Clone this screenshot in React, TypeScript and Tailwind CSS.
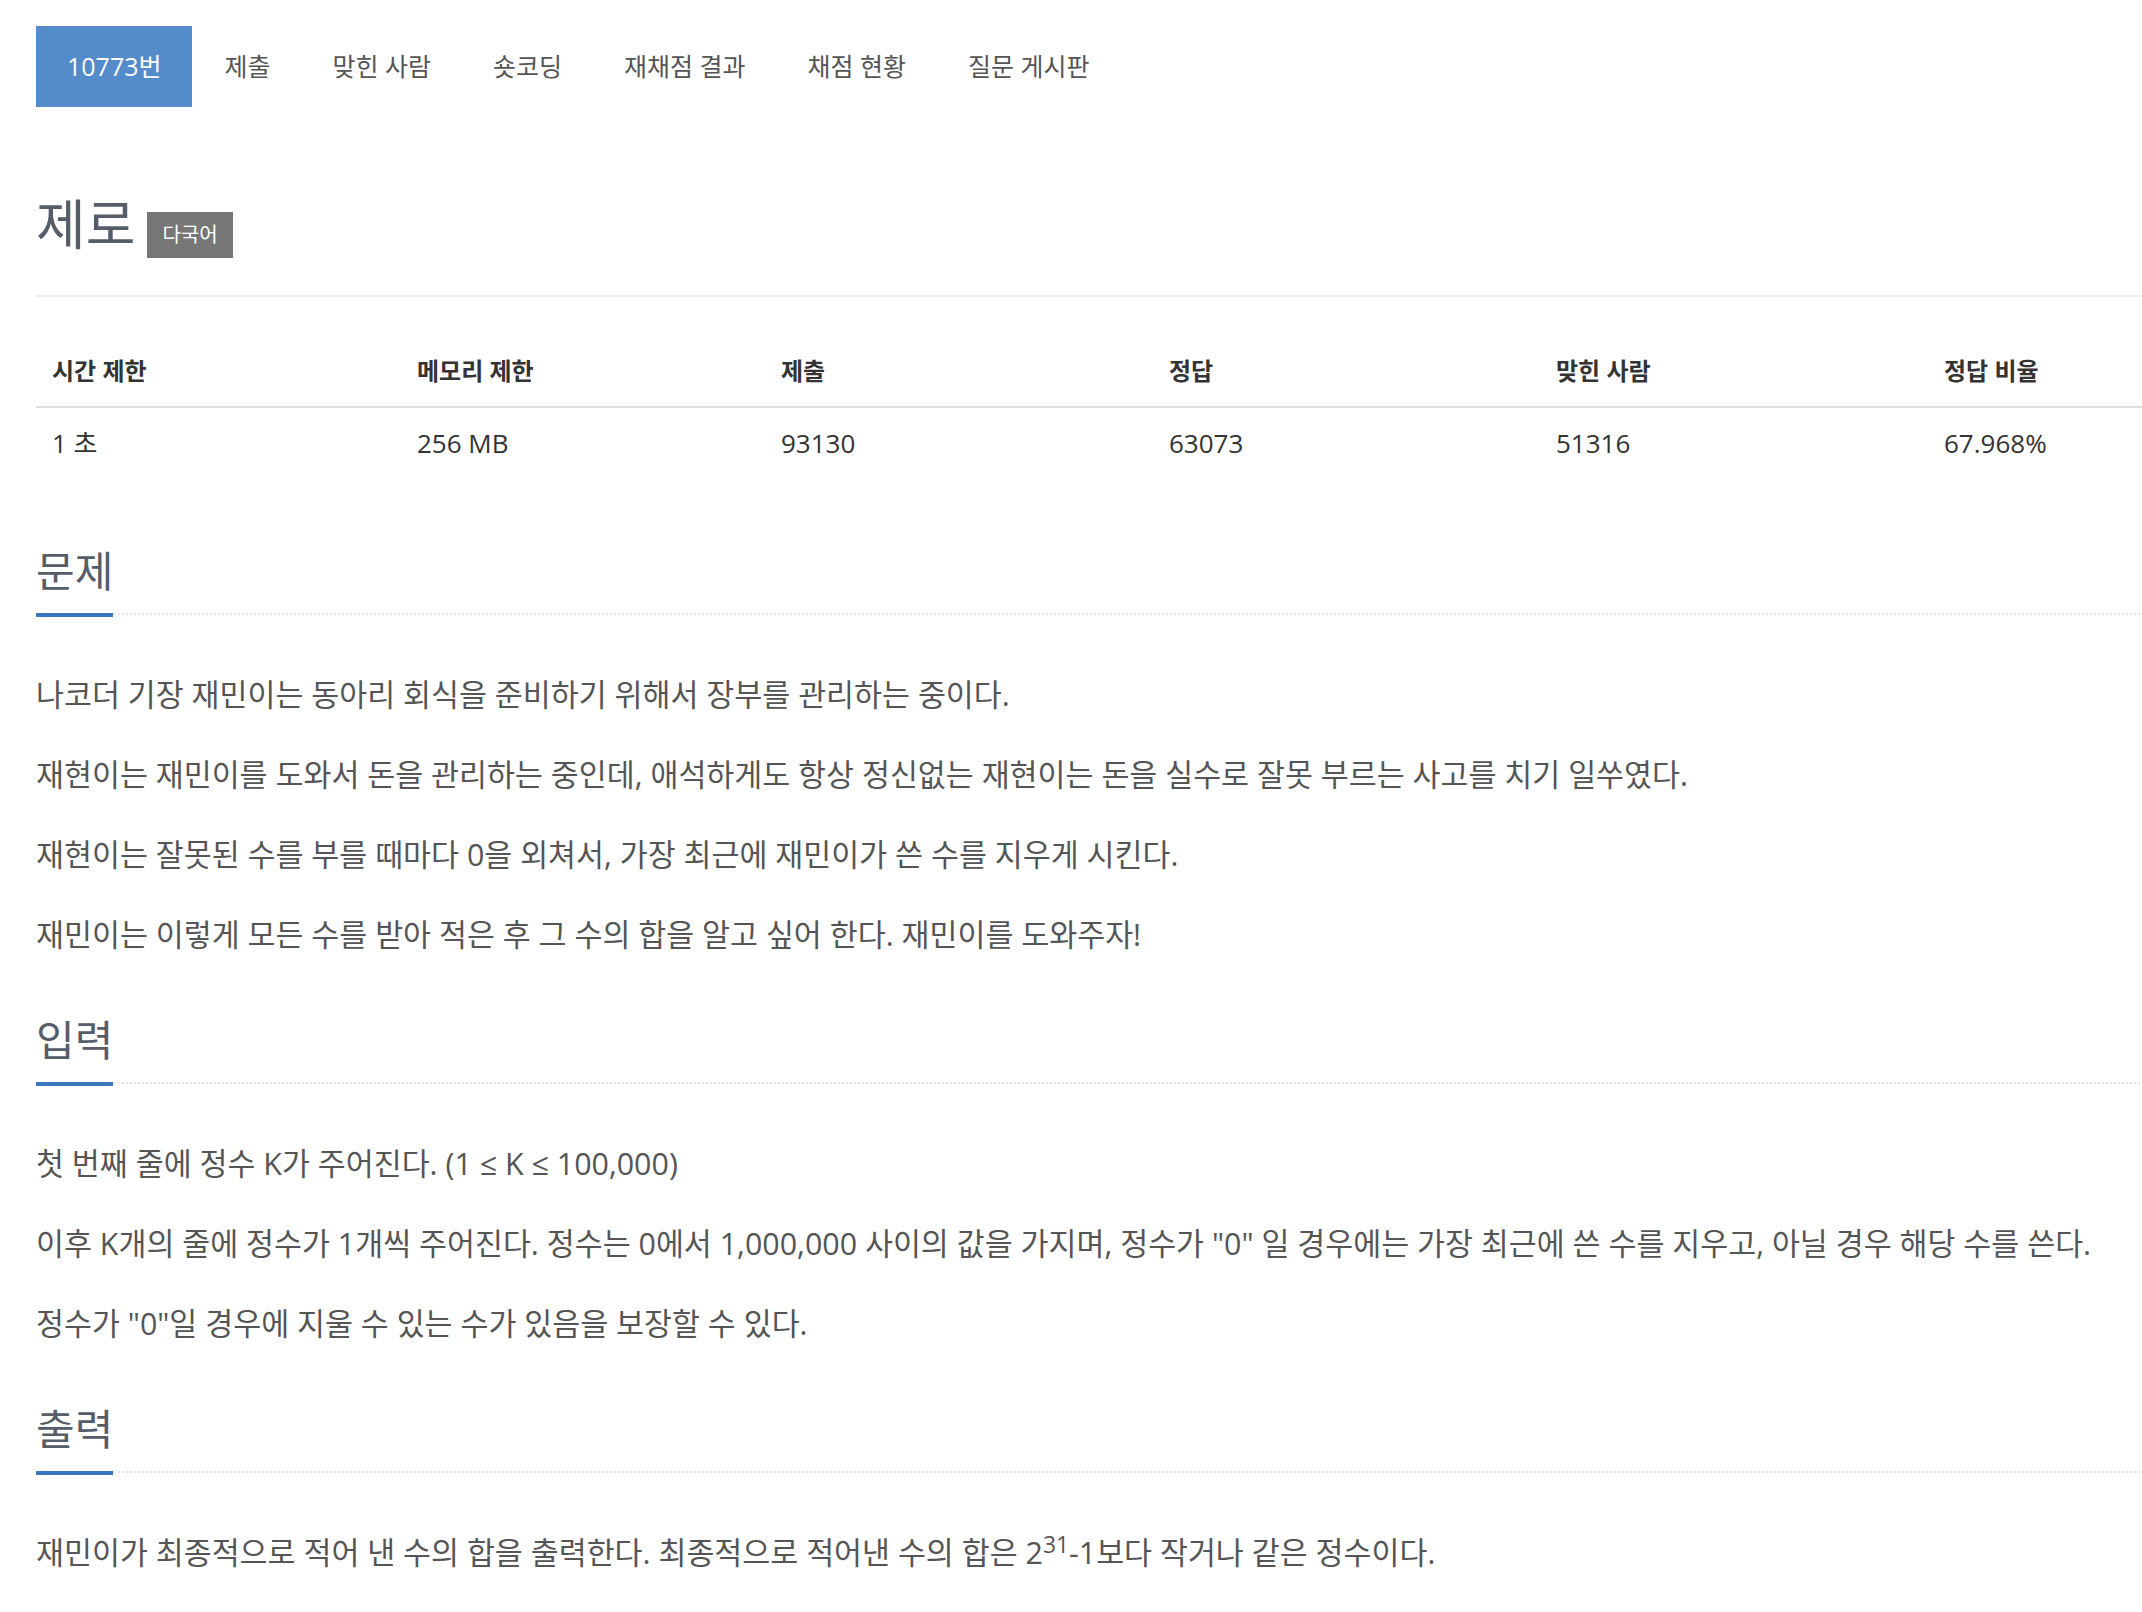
import React from "react";

const navItems = ["제출", "맞힌 사람", "숏코딩", "재채점 결과", "채점 현황", "질문 게시판"];

const headers = ["시간 제한", "메모리 제한", "제출", "정답", "맞힌 사람", "정답 비율"];
const values = ["1 초", "256 MB", "93130", "63073", "51316", "67.968%"];

function Heading({ children }: { children: React.ReactNode }) {
  return (
    <div className="flex items-end">
      <h2 className="text-[42px] leading-[48px] pb-[18px] border-b-4 border-[#3a76bd] text-[#555d68] font-normal">
        {children}
      </h2>
      <div className="flex-1 border-b-2 border-dotted border-[#e1e5ec] mb-[2px]" />
    </div>
  );
}

function Paras({ items }: { items: React.ReactNode[] }) {
  return (
    <div className="mt-[58px] flex flex-col gap-[40px] text-[30.4px] leading-[40px] text-[#555555]">
      {items.map((p, i) => (
        <p key={i} className="whitespace-nowrap">
          {p}
        </p>
      ))}
    </div>
  );
}

export default function App() {
  return (
    <div className="w-full overflow-hidden bg-white font-['Open_Sans','Noto_Sans_CJK_KR',sans-serif]">
      <div className="w-[2240px] pl-[36px] pt-[26px] pb-[40px]">
        {/* nav */}
        <div className="flex gap-[2px] text-[25px] leading-[81px]">
          <div className="px-[31px] bg-[#548bca] text-white">10773번</div>
          {navItems.map((n) => (
            <div key={n} className="px-[30px] text-[#555555]">
              {n}
            </div>
          ))}
        </div>

        {/* title */}
        <div className="mt-[87px] flex items-start gap-[12px]">
          <h1 className="text-[54px] leading-[60px] text-[#555d68] font-normal">제로</h1>
          <span className="mt-[18px] h-[46px] px-[15px] bg-[#777777] text-white text-[20px] leading-[46px]">
            다국어
          </span>
        </div>
        <div className="mt-[37px] h-[2px] bg-[#eeeeee]" />

        {/* table */}
        <div className="mt-[56px]">
          <div className="grid grid-cols-[365px_364px_388px_387px_388px_316px] border-b-2 border-[#dddddd]">
            {headers.map((h) => (
              <div key={h} className="pl-[16px] pb-[17px] text-[24px] leading-[36px] font-bold text-[#333333]">
                {h}
              </div>
            ))}
          </div>
          <div className="grid grid-cols-[365px_364px_388px_387px_388px_316px]">
            {values.map((v) => (
              <div key={v} className="pl-[16px] pt-[17px] pb-[17px] text-[26px] leading-[36px] text-[#333333]">
                {v}
              </div>
            ))}
          </div>
        </div>

        {/* 문제 */}
        <div className="mt-[69px]">
          <Heading>문제</Heading>
          <Paras
            items={[
              "나코더 기장 재민이는 동아리 회식을 준비하기 위해서 장부를 관리하는 중이다.",
              "재현이는 재민이를 도와서 돈을 관리하는 중인데, 애석하게도 항상 정신없는 재현이는 돈을 실수로 잘못 부르는 사고를 치기 일쑤였다.",
              "재현이는 잘못된 수를 부를 때마다 0을 외쳐서, 가장 최근에 재민이가 쓴 수를 지우게 시킨다.",
              "재민이는 이렇게 모든 수를 받아 적은 후 그 수의 합을 알고 싶어 한다. 재민이를 도와주자!",
            ]}
          />
        </div>

        {/* 입력 */}
        <div className="mt-[61px]">
          <Heading>입력</Heading>
          <Paras
            items={[
              "첫 번째 줄에 정수 K가 주어진다. (1 ≤ K ≤ 100,000)",
              "이후 K개의 줄에 정수가 1개씩 주어진다. 정수는 0에서 1,000,000 사이의 값을 가지며, 정수가 \"0\" 일 경우에는 가장 최근에 쓴 수를 지우고, 아닐 경우 해당 수를 쓴다.",
              "정수가 \"0\"일 경우에 지울 수 있는 수가 있음을 보장할 수 있다.",
            ]}
          />
        </div>

        {/* 출력 */}
        <div className="mt-[61px]">
          <Heading>출력</Heading>
          <Paras
            items={[
              <>
                재민이가 최종적으로 적어 낸 수의 합을 출력한다. 최종적으로 적어낸 수의 합은 2<sup>31</sup>-1보다 작거나 같은 정수이다.
              </>,
            ]}
          />
        </div>
      </div>
    </div>
  );
}
